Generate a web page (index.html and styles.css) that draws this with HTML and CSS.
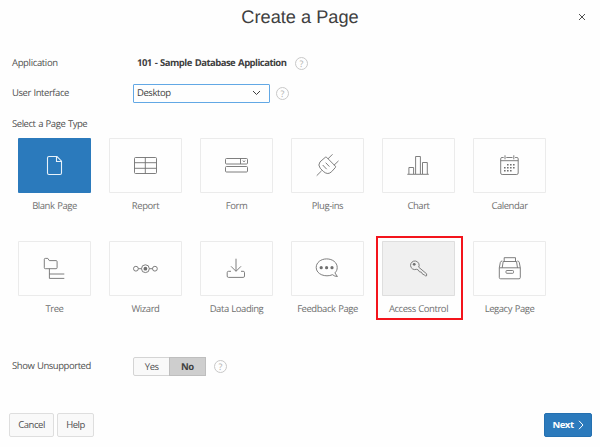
FILE: index.html
```html
<!DOCTYPE html>
<html lang="en">
<head>
<meta charset="utf-8">
<title>Create a Page</title>
<link rel="stylesheet" href="styles.css">
</head>
<body>
<main class="dialog">
  <header class="dialog-head">
    <h1>Create a Page</h1>
    <button class="close" aria-label="Close"><svg width="8" height="8" viewBox="0 0 8 8"><path d="M1 1l6 6M7 1L1 7"/></svg></button>
  </header>
  <div class="row row-app">
    <span class="label app">Application</span>
    <strong class="value">101 - Sample Database Application</strong>
    <span class="help">?</span>
  </div>
  <div class="row row-ui">
    <span class="label">User Interface</span>
    <div class="select"><span>Desktop</span><svg width="9" height="6" viewBox="0 0 9 6"><path d="M1 1l3.5 3.5L8 1"/></svg></div>
    <span class="help">?</span>
  </div>
  <h2>Select a Page Type</h2>
  <div class="types">
    <div class="type selected"><div class="tile"><svg viewBox="0 0 73 55"><path d="M31 18.500h8l4.500 4.700v11.800q0 1.500-1.500 1.500H31q-1.500 0-1.500-1.500V20q0-1.500 1.500-1.500zM38.500 18.500v5h5"/></svg></div><span>Blank Page</span></div>
    <div class="type"><div class="tile"><svg viewBox="0 0 73 55"><rect x="25.500" y="19.500" width="22" height="16" rx="1"/><path d="M25.500 24.700h22M25.500 30.300h22M36.300 19.500v16"/></svg></div><span>Report</span></div>
    <div class="type"><div class="tile"><svg viewBox="0 0 73 55"><rect x="25.500" y="20.500" width="22" height="5.500" rx="1"/><rect x="25.500" y="28.500" width="22" height="5.500" rx="1"/><path d="M40.500 20.500v5.500M42.700 22.700l1.300 1 1.300-1"/></svg></div><span>Form</span></div>
    <div class="type"><div class="tile"><svg viewBox="0 0 73 55"><path d="M34.300 19.300q.7-.5 1.300 0l8.700 8.800q.7.800 0 1.500l-3.600 4q-3.700 3.800-8.200 0l-3.300-3.400q-2.600-3.200-.2-6.300zM36.800 21l4.700-4.700M42.900 27.300l4.600-4.400M25.700 37.700l4.900-4.900M31.700 27l4 4.200M34.700 24.700l3.700 3.900"/></svg></div><span>Plug-ins</span></div>
    <div class="type"><div class="tile"><svg viewBox="0 0 73 55"><path d="M25.300 36.300h21.500M26.900 36v-6.500h4.700V36M33.600 36V18.500h4.800V36M40.500 36V24.500h4.800V36"/></svg></div><span>Chart</span></div>
    <div class="type"><div class="tile"><svg viewBox="0 0 73 55"><path d="M30.700 19.500h-1.700q-1.300 0-1.300 1.300V35q0 1.500 1.500 1.500h14.500q1.500 0 1.500-1.500V20.800q0-1.300-1.300-1.300h-1.800M33.300 19.500h6.200M27.700 22.700h17.500M32 17.300v4M40.800 17.300v4"/><path class="dots" d="M34 26.700h8M31 29.700h11M31 32.700h8"/></svg></div><span>Calendar</span></div>
    <div class="type"><div class="tile"><svg viewBox="0 0 73 55"><path d="M27.300 17.400h2.500l1.500 2.200h6.800q1 0 1 1v6.100q0 1-1 1H27.300q-1 0-1-1v-8.300q0-1 1-1zM31.400 27.700v9.700h14.900M31.400 33h14.900"/></svg></div><span>Tree</span></div>
    <div class="type"><div class="tile"><svg viewBox="0 0 73 55"><circle cx="26.900" cy="27.700" r="2.400"/><circle cx="36.400" cy="27.700" r="3.900"/><circle cx="45.900" cy="27.700" r="2.400"/><circle class="fill" cx="36.400" cy="27.700" r="1.900"/><path d="M29.300 27.700h3.200M40.300 27.700h3.200"/></svg></div><span>Wizard</span></div>
    <div class="type"><div class="tile"><svg viewBox="0 0 73 55"><path d="M31 30.300h-2.500q-1.300 0-1.300 1.300v3.500q0 1.300 1.300 1.300h14.700q1.300 0 1.300-1.300v-3.500q0-1.300-1.300-1.300H41M36 17.700v12.500M31 25.300l5 5 5-5"/></svg></div><span>Data Loading</span></div>
    <div class="type"><div class="tile"><svg viewBox="0 0 73 55"><path d="M41.500 33.700c-7 3-16.300-.3-16.300-7.200 0-5 4.700-8.600 10.500-8.600s10.500 3.600 10.500 8.600c0 2.300-.8 4-2.300 5.400l2.500 3.600q-2.800-.1-4.900-1.800z"/><g class="fill"><circle cx="30.200" cy="26.700" r="1.600"/><circle cx="35.600" cy="26.700" r="1.600"/><circle cx="41" cy="26.700" r="1.600"/></g></svg></div><span>Feedback Page</span></div>
    <div class="type marked"><div class="tile"><svg viewBox="0 0 73 55"><path d="M36.700 26.200a4.300 4.300 0 1 0-2.300 2.100l1.700.5 1.400 2 1.900.4 1.200 2 1.700.7 1 .9h1.300v-2z"/><circle class="fill" cx="32.200" cy="23.300" r="1.400"/></svg></div><span>Access Control</span></div>
    <div class="type"><div class="tile"><svg viewBox="0 0 73 55"><path d="M26.300 26.800h21v9.700q0 1.300-1.300 1.300H27.600q-1.300 0-1.300-1.300zM26.300 26.800l1-5.300q.3-1.500 2-1.500M47.300 26.800l-1-5.300q-.3-1.500-2-1.500M29.200 26.800l1-6.300h13.300l1 6.300M31.200 20.500v-3.800h11.300v3.800"/><rect x="33" y="29.500" width="7.500" height="2.800" rx=".8"/></svg></div><span>Legacy Page</span></div>
  </div>
  <div class="row row-show">
    <span class="label">Show Unsupported</span>
    <div class="toggle"><span>Yes</span><span class="on">No</span></div>
    <span class="help">?</span>
  </div>
  <footer>
    <button class="btn cancel">Cancel</button>
    <button class="btn help-btn">Help</button>
    <button class="btn next">Next<svg width="6" height="10" viewBox="0 0 6 10"><path d="M1 .8L5 5 1 9.200"/></svg></button>
  </footer>
</main>
</body>
</html>
```
FILE: styles.css
```css
*, *::after { box-sizing: border-box; }
body {
  margin: 0;
  background: #fefefe;
  color: #505050;
  font: 9.5px/14px "Open Sans", "Noto Sans", sans-serif;
  letter-spacing: -.45px;
  word-spacing: .6px;
  text-rendering: geometricPrecision;
}
svg { fill: none; stroke: currentColor; stroke-width: 1; display: block; }
button { font: inherit; color: inherit; letter-spacing: inherit; }
.dialog { width: 600px; height: 447px; display: flex; flex-direction: column; overflow: hidden; }
.dialog-head { height: 34px; display: grid; grid-template-columns: 1fr auto 1fr; align-items: center; }
h1 {
  grid-column: 2;
  margin: 0;
  font: 18.2px/34px "Liberation Sans", Arial, sans-serif;
  letter-spacing: 0;
  word-spacing: 0;
  color: #404040;
}
.close { justify-self: end; margin-right: 14px; padding: 0; border: 0; background: none; }
.row { display: flex; align-items: center; padding-left: 12px; height: 20px; flex: none; }
.row-app { margin-top: 19px; }
.row-ui { margin-top: 10px; }
.row-show { margin-top: 39px; }
.label { width: 121px; white-space: nowrap; }
.app { letter-spacing: -.35px; }
.value { padding-left: 4px; width: 162px; white-space: nowrap; color: #404040; letter-spacing: -.53px; word-spacing: 1px; }
.help {
  width: 13px; height: 13px;
  border: 1px solid #c8c8c8;
  border-radius: 50%;
  color: #b0b0b0;
  font-size: 9px;
  letter-spacing: 0;
  line-height: 11px;
  text-align: center;
}
.select {
  width: 137px; height: 19px;
  margin-right: 6px;
  padding: 0 8px 0 3px;
  border: 1px solid #62a8e5;
  border-radius: 1px;
  display: flex; align-items: center; justify-content: space-between;
  color: #404040;
}
h2 { margin: 14px 0 0 12px; font-size: inherit; font-weight: 400; line-height: 14px; }
.types {
  margin: 7px 0 0 18px;
  display: grid;
  grid-template-columns: repeat(6, 73px);
  grid-auto-rows: 76px;
  gap: 27px 18px;
}
.type { text-align: center; white-space: nowrap; color: #707070; }
.type > span { display: block; margin-top: 6px; }
.tile { height: 55px; border-radius: 1px; box-shadow: inset 0 0 0 1px #ebebeb; }
.tile svg { width: 73px; height: 55px; stroke-width: .9; }
.tile .fill { fill: currentColor; stroke: none; }
.dots { stroke-width: 1.4; stroke-dasharray: 1.6 1.4; }
.selected .tile { background: #2b7abc; box-shadow: none; color: #e8f2fa; }
.selected .tile svg { stroke-width: 1.1; }
.marked { position: relative; }
.marked::after {
  content: "";
  position: absolute;
  top: -5px; left: -6px;
  width: 87px; height: 84px;
  border: 2px solid #f3141c;
}
.marked .tile { background: #f0f0f0; box-shadow: inset 0 0 0 1px #dedede; }
.toggle {
  width: 73px; height: 19px;
  margin-right: 8px;
  display: flex;
  border: 1px solid #d4d4d4;
  border-radius: 2px;
  background: #f9f9f9;
  line-height: 18px;
  text-align: center;
}
.toggle span { flex: 1; }
.toggle .on { background: #cecece; font-weight: 700; color: #404040; box-shadow: 0 0 0 1px #bebebe; }
footer { display: flex; margin-top: 37px; padding: 0 8px 0 9px; }
.btn {
  height: 24px;
  padding: 0;
  border: 1px solid #dedede;
  border-radius: 2px;
  background: #f9f9f9;
  line-height: 22px;
}
.cancel { width: 45px; margin-right: 3px; }
.help-btn { width: 37px; }
.next {
  width: 48px;
  margin-left: auto;
  display: flex; align-items: center; justify-content: center; gap: 4px;
  background: #2b7abc;
  border-color: #2470b0;
  color: #fff;
  font-weight: 700;
}
```
